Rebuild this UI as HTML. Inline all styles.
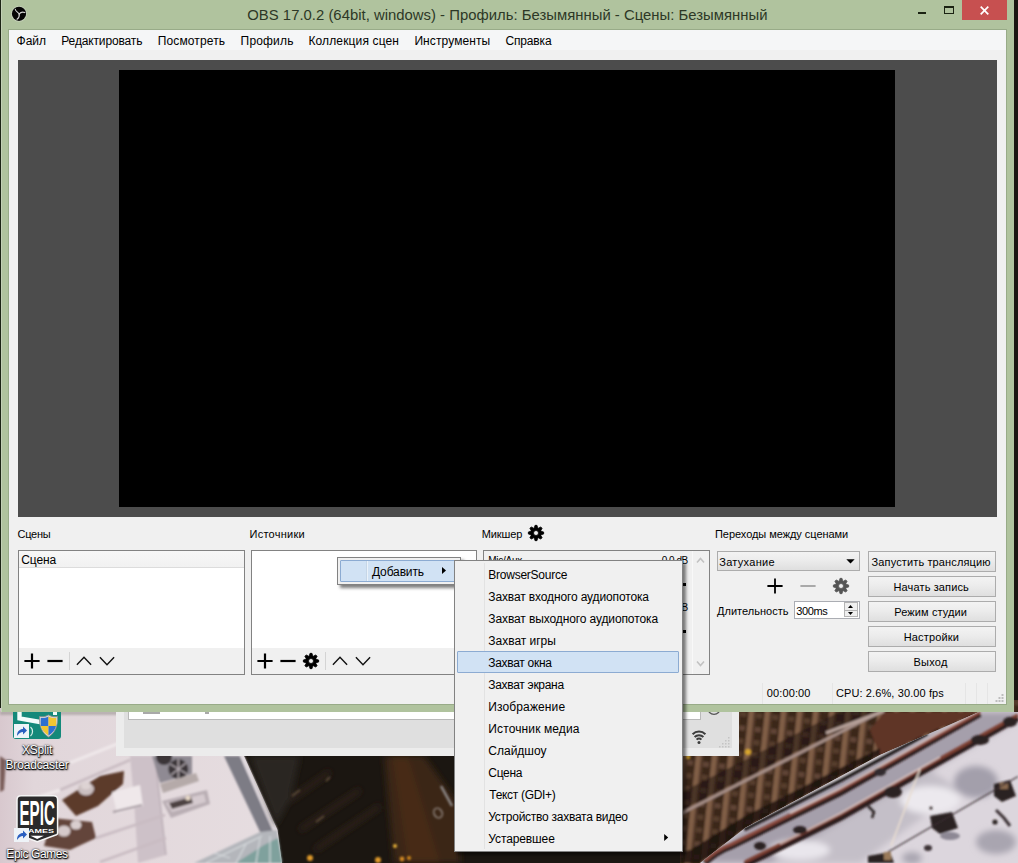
<!DOCTYPE html>
<html lang="ru">
<head>
<meta charset="utf-8">
<title>OBS</title>
<style>
html,body{margin:0;padding:0;}
body{width:1018px;height:863px;overflow:hidden;position:relative;background:#1c1612;font-family:"Liberation Sans",sans-serif;font-size:11px;color:#000;}
.a{position:absolute;box-sizing:border-box;}
.t{position:absolute;white-space:nowrap;line-height:20px;height:20px;}
.list{position:absolute;box-sizing:border-box;border:1px solid #828282;background:#fff;}
.tb{position:absolute;left:0;right:0;bottom:0;height:26px;background:#f0f0f0;}
.btn{position:absolute;left:868px;width:128px;height:21px;box-sizing:border-box;border:1px solid #acacac;background:linear-gradient(#f3f3f3,#ececec 45%,#dfdfdf);}
.menu{position:absolute;background:#f0f0f0;border:1px solid #828282;box-sizing:border-box;box-shadow:3px 3px 3px rgba(0,0,0,.5);}
.ic{position:absolute;overflow:visible;}
.dl{position:absolute;white-space:nowrap;color:#fff;font-size:12px;line-height:16px;text-align:center;text-shadow:0 0 2px #000,1px 1px 2px #000,0 1px 1px #000;}
</style>
</head>
<body>
<!-- wallpaper -->
<svg class="a" style="left:0;top:0" width="1018" height="863" viewBox="0 0 1018 863">
<defs>
<filter id="b1" x="-10%" y="-10%" width="120%" height="120%"><feGaussianBlur stdDeviation="1.2"/></filter>
<filter id="b3" x="-10%" y="-10%" width="120%" height="120%"><feGaussianBlur stdDeviation="3"/></filter>
<linearGradient id="snowL" x1="0" y1="0" x2="1" y2="0"><stop offset="0" stop-color="#d8c8ce"/><stop offset="0.12" stop-color="#e1d6da"/><stop offset="1" stop-color="#e6dde0"/></linearGradient>
<linearGradient id="bld" x1="0" y1="0" x2="1" y2="1"><stop offset="0" stop-color="#4a3428"/><stop offset="1" stop-color="#5c4234"/></linearGradient>
</defs>
<rect width="1018" height="863" fill="#1b1611"/>
<!-- left snowy roof -->
<polygon points="0,700 244,700 244,756 277.5,830 282,863 0,863" fill="url(#snowL)"/>
<g filter="url(#b1)">
<!-- parapet grey band -->
<polygon points="224,756 240,756 273,831 262,836" fill="#7d7c85"/>
<polygon points="240,756 244,756 277.5,830 273,831" fill="#e4dde2"/>
<!-- glass structure -->
<polygon points="194,863 260,832 277,830 282,863" fill="#b4b6bb"/>
<polygon points="236,863 264,845 278,838 282,863" fill="#7fa19d"/>
<path d="M206 863 L262 836 M236 863 L246 844 M256 863 L260 838 M270 863 L270 836 M214 853 L230 858" stroke="#d5d9dc" stroke-width="1.2" fill="none"/>
<!-- translucent panel -->
<polygon points="130,756 155,756 166,855 138,863 134,800" fill="#cdc1c8"/>
<path d="M155 756 L166 855" stroke="#b5a9b1" stroke-width="1.2"/>
<!-- fans -->
<polygon points="152,756 192,756 192,774 160,783" fill="#8f8a93"/>
<circle cx="178.3" cy="769" r="10" fill="#3b3539"/><path d="M170 764 L187 774 M171 775 L186 763 M178.3 759 V779" stroke="#b9b0b6" stroke-width="1.3"/>
<circle cx="164" cy="757" r="8" fill="#3b3539"/>
<polygon points="160,784 196,773 199,781 163,793" fill="#b5aaa9"/>
<!-- tray -->
<polygon points="162,801 207,790 210,804 171,818" fill="#b9aeb4"/>
<polygon points="166,803 204,794 206,802 172,812" fill="#d5cacf"/>
<polygon points="169,803 191,797 193,803 172,809" fill="#4e4242"/><circle cx="188" cy="798" r="2.5" fill="#e8d9c8"/>
<!-- left structures -->
<polygon points="100,776 124,771 123,784 98,806 76,816 62,800 84,786" fill="#5b3a2c"/>
<ellipse cx="86" cy="789" rx="8" ry="6.5" fill="#cbbfc0"/><ellipse cx="86" cy="786" rx="5" ry="3.5" fill="#ddd3d3"/>
<polygon points="52,818 92,822 96,838 70,850 44,846" fill="#64453a"/>
<ellipse cx="64" cy="831" rx="6.5" ry="5.5" fill="#d5c9ca"/><ellipse cx="76" cy="825" rx="5.5" ry="4.5" fill="#d9cecf"/>
<polygon points="112,792 140,785 143,806 117,813" fill="#efe8ea"/>
<path d="M113 812 L142 805" stroke="#a79ca3" stroke-width="2"/>
<polygon points="0,756 6,760 4,790 0,792" fill="#7a5d5a"/>
<path d="M60 790 L130 760 M96 838 L165 815 M100 862 L166 838" stroke="#c9bcc2" stroke-width="2.5" fill="none"/>
<path d="M52 770 L122 742 M30 800 L60 790" stroke="#efe8ea" stroke-width="3" fill="none"/>
<rect x="0" y="711" width="250" height="4" fill="#8d8a86" opacity="0.5"/>
</g>
<!-- street in dark middle -->
<g filter="url(#b3)">
<polygon points="384,756 424,756 460,806 460,863 394,863 388,800" fill="#3b2516"/>
<polygon points="392,756 408,756 440,863 408,863" fill="#4a2d19" opacity="0.8"/>
<polygon points="250,756 300,756 290,800 276,826" fill="#2a2622"/>
<path d="M290 800 L330 772 M300 830 L360 790 M315 850 L380 806" stroke="#2e241b" stroke-width="5" fill="none"/>
</g>
<g filter="url(#b1)">
<circle cx="310" cy="858" r="3" fill="#e09a2a"/><circle cx="378" cy="860" r="3" fill="#e09a2a"/><circle cx="395" cy="846" r="2" fill="#e8b23a"/><circle cx="402" cy="859" r="2.4" fill="#d58a22"/><circle cx="409" cy="858" r="2" fill="#d58a22"/>
<path d="M441 786 L452 806" stroke="#8e8a8a" stroke-width="2.5"/>
<ellipse cx="438" cy="813" rx="4" ry="5" fill="none" stroke="#8a7f78" stroke-width="1.6" transform="rotate(-30 438 813)"/>
<path d="M292 796 L300 790 M316 822 L324 816 M330 777 L326 781" stroke="#5a4a38" stroke-width="2"/>
</g>
<!-- right: building + snowy roof -->
<defs>
<pattern id="cols" width="16" height="40" patternUnits="userSpaceOnUse" patternTransform="rotate(6) translate(3,0)">
<rect width="16" height="40" fill="#38251b"/><rect x="0" width="5.5" height="40" fill="#8a664e"/><rect x="5.5" width="2" height="40" fill="#5a3e2e"/>
<rect x="8" y="4" width="6" height="5" fill="#64483a"/><rect x="8" y="17" width="6" height="5" fill="#5a3f30"/><rect x="8" y="30" width="6" height="5" fill="#5a3f30"/>
</pattern>
<clipPath id="bclip"><polygon points="680,700 1018,700 1018,712 979,712 880,755 745,828 700,863 680,863"/></clipPath>
<clipPath id="sclip"><polygon points="979,712 1018,712 1018,863 700,863 745,828 880,755"/></clipPath>
</defs>
<g clip-path="url(#bclip)">
<rect x="680" y="700" width="340" height="165" fill="#46301f"/>
<g filter="url(#b1)">
<rect x="680" y="700" width="340" height="165" fill="url(#cols)" opacity="0.85"/>
<!-- shadow band above ledge -->
<path d="M680 802 L880 700" stroke="#21140e" stroke-width="16" opacity="0.55"/>
<!-- ledge -->
<path d="M680 814 L884 710" stroke="#a8928b" stroke-width="3"/>
<!-- far right reddish wall -->
<polygon points="884,712 980,712 930,732 880,756 870,730" fill="#5f3427"/>
<path d="M826 733 L884 711" stroke="#b7a39c" stroke-width="3"/>
<!-- dark base shadow -->
<polygon points="680,863 700,863 745,828 880,755 880,748 745,816 690,850 680,852" fill="#1a100c" opacity="0.8"/>
<circle cx="748" cy="752" r="3" fill="#d9a62e"/><circle cx="688" cy="757" r="2" fill="#c89a2a"/>
</g>
</g>
<g clip-path="url(#sclip)">
<rect x="690" y="705" width="330" height="160" fill="#dcd6dd"/>
<g filter="url(#b3)">
<polygon points="700,863 745,828 880,755 979,712 1018,712 1018,720 840,822 770,863" fill="#a59fab"/><polygon points="770,863 840,822 930,770 960,790 860,863" fill="#c4bfc8"/>
<ellipse cx="976" cy="782" rx="22" ry="16" fill="#a39fab"/><ellipse cx="996" cy="842" rx="20" ry="12" fill="#a9a5b0"/><ellipse cx="912" cy="858" rx="10" ry="6" fill="#a9a5b0"/>
<ellipse cx="930" cy="800" rx="30" ry="14" fill="#ece9ee"/><ellipse cx="800" cy="850" rx="30" ry="10" fill="#e9e6ec"/>
</g>
<g filter="url(#b1)">
<!-- pipes: shadow, body, highlight -->
<path d="M744 829 L840 780 L927 733" stroke="#241a1c" stroke-width="5" fill="none"/>
<path d="M744 826 L840 777 L927 730" stroke="#e6e0e4" stroke-width="2.2" fill="none"/>
<path d="M705 863 Q716 852 732 846 L840 793 L980 714" stroke="#2a1d1e" stroke-width="6" fill="none"/>
<path d="M705 861 Q716 850 732 844 L840 790 L980 712" stroke="#8a4a3c" stroke-width="3.2" fill="none"/>
<path d="M790 813 L840 788.5 L978 711" stroke="#e3cfcc" stroke-width="1.4" fill="none"/>
<path d="M745 865 L840 818 L1018 718" stroke="#2a1d1e" stroke-width="6" fill="none"/>
<path d="M745 862 L840 814.6 L1018 715" stroke="#7d3f33" stroke-width="3.2" fill="none"/>
<path d="M780 844 L840 813.4 L940 757" stroke="#e3cfcc" stroke-width="1.4" fill="none"/>
<!-- dark objects -->
<ellipse cx="893" cy="792" rx="9" ry="6" fill="#2a2022"/><ellipse cx="880" cy="772" rx="6" ry="4" fill="#332a2d"/>
<ellipse cx="980" cy="740" rx="9" ry="5" fill="#2a2022"/><ellipse cx="1010" cy="722" rx="7" ry="5" fill="#2a2022"/>
<polygon points="930,816 952,812 958,828 940,834 932,828" fill="#2c2221"/><ellipse cx="950" cy="836" rx="10" ry="4" fill="#8d8894"/>
<polygon points="994,784 1010,780 1016,796 1002,802 994,796" fill="#2c2221"/><rect x="1000" y="783" width="8" height="6" fill="#8a6a50"/>
<polygon points="868,856 890,852 894,863 868,863" fill="#2c2221"/><rect x="884" y="852" width="7" height="8" fill="#9a7a5a"/>
<path d="M868 806 L874 812 L872 818" stroke="#2c2221" stroke-width="2.5" fill="none"/>
<path d="M996 810 L1004 818 L1010 826" stroke="#3a3034" stroke-width="3" fill="none"/><circle cx="995" cy="822" r="2.6" fill="#2c2221"/>
<circle cx="931" cy="808" r="1.6" fill="#2c2221"/><ellipse cx="928" cy="848" rx="4" ry="3" fill="#3a3034"/>
<ellipse cx="800" cy="830" rx="7" ry="4" fill="#2a2022"/><ellipse cx="760" cy="846" rx="6" ry="4" fill="#2a2022"/>
<!-- wire -->
<path d="M888 852 L1018 776.5" stroke="#3a2f33" stroke-width="1.2" fill="none"/>
<path d="M920 769 L891 846" stroke="#e9ddd0" stroke-width="1.6" fill="none"/>
</g>
</g>
</svg>

<!-- window behind -->
<div class="a" style="left:116px;top:700px;width:623px;height:56px;background:#ececec;"></div>
<div class="a" style="left:124px;top:700px;width:608px;height:48px;background:#dfdfdf;"></div>
<div class="a" style="left:128px;top:700px;width:573px;height:20px;background:#fff;border:1px solid #b9b9b9;"></div><div class="a" style="left:143px;top:712px;width:17px;height:1.5px;background:#a9a9a9;"></div><div class="a" style="left:205px;top:712px;width:4px;height:1.5px;background:#a9a9a9;"></div>
<svg class="ic" style="left:691px;top:729px" width="16" height="16" viewBox="0 0 16 16"><g fill="none" stroke="#3c3c3c" stroke-width="2"><path d="M1.6 5.2 A9 9 0 0 1 14.4 5.2"/><path d="M3.6 8 A6.2 6.2 0 0 1 12.4 8"/><path d="M5.6 10.6 A3.4 3.4 0 0 1 10.4 10.6"/></g><circle cx="8" cy="13.4" r="1.5" fill="#3c3c3c"/></svg>
<svg class="ic" style="left:706px;top:706px" width="16" height="10" viewBox="0 0 16 10"><circle cx="8" cy="2" r="6.3" fill="none" stroke="#555" stroke-width="1.2"/></svg>
<svg class="ic" style="left:719px;top:736px" width="12" height="12" viewBox="0 0 12 12" fill="#c4c4c4"><rect x="9" y="1" width="1.5" height="1.5"/><rect x="6" y="4" width="1.5" height="1.5"/><rect x="9" y="4" width="1.5" height="1.5"/><rect x="3" y="7" width="1.5" height="1.5"/><rect x="6" y="7" width="1.5" height="1.5"/><rect x="9" y="7" width="1.5" height="1.5"/><rect x="0" y="10" width="1.5" height="1.5"/><rect x="3" y="10" width="1.5" height="1.5"/><rect x="6" y="10" width="1.5" height="1.5"/><rect x="9" y="10" width="1.5" height="1.5"/></svg>
<!-- desktop icons -->
<div class="a" style="left:13px;top:700px;width:48px;height:39px;background:#14897a;border-radius:0 0 3px 3px;"></div>
<svg class="ic" style="left:13px;top:700px" width="48" height="39" viewBox="0 0 48 39"><path d="M6.5 0 V18.5 L27 22" fill="none" stroke="#f2fbfa" stroke-width="4.4"/><path d="M42 0 V15" fill="none" stroke="#f2fbfa" stroke-width="4"/><path d="M9 0 H40 V6 L9 4Z" fill="#0f6f63" opacity="0.6"/><path d="M17.5 27 A6 6 0 0 1 17.5 36" fill="none" stroke="#d8efe9" stroke-width="1.2"/><rect x="1" y="24" width="15" height="14" fill="#eef3f8"/><path d="M4 36 C4 31 7 29 10 29 V26.5 L14 30.5 L10 34.5 V32 C7.5 32 6 33.5 4 36Z" fill="#2a5fc0"/><path d="M35.5 15 C32 17 29 17 26.5 16.5 C26 26 29 33 35.5 37 C42 33 45 26 44.5 16.5 C42 17 39 17 35.5 15Z" fill="#d9d9d9" stroke="#8e8e8e" stroke-width="0.8"/><path d="M35.5 16.5 V26 H28 C27.6 22 27.7 19.5 27.8 18 C30.5 18.2 33 17.8 35.5 16.5Z" fill="#2d6fd1"/><path d="M35.5 16.5 V26 H43 C43.4 22 43.3 19.5 43.2 18 C40.5 18.2 38 17.8 35.5 16.5Z" fill="#f1c531"/><path d="M35.5 26 V35.5 C31.5 33 29 30 28 26Z" fill="#f1c531"/><path d="M35.5 26 V35.5 C39.5 33 42 30 43 26Z" fill="#2d6fd1"/></svg>
<div class="dl" style="left:-14px;width:102px;top:742px;letter-spacing:-0.2px;">XSplit</div>
<div class="dl" style="left:-14px;width:102px;top:756.5px;letter-spacing:-0.15px;">Broadcaster</div>
<svg class="ic" style="left:16px;top:795px" width="44" height="48" viewBox="0 0 44 48"><path d="M5 0.8 H37.6 Q41.6 0.8 41.6 4.8 V38 Q41.6 39.3 40.4 39.8 L21.3 46.6 L2.2 39.8 Q1 39.3 1 38 V4.8 Q1 0.8 5 0.8Z" fill="#2b2a2b" stroke="#f4f4f4" stroke-width="1.5"/><g transform="translate(0,30) scale(1,1.5)"><text x="21.2" y="0" text-anchor="middle" font-family="'Liberation Sans',sans-serif" font-weight="bold" font-size="24" fill="#fff" textLength="35.5" lengthAdjust="spacingAndGlyphs">EPIC</text></g><text x="21.5" y="37.8" text-anchor="middle" font-family="'Liberation Sans',sans-serif" font-weight="bold" font-size="5.6" fill="#fff" textLength="33" lengthAdjust="spacingAndGlyphs">GAMES</text><path d="M14.5 40.8 H27.9 L21.2 43.9Z" fill="#fff"/></svg>
<svg class="ic" style="left:14px;top:828px" width="15" height="14" viewBox="0 0 15 14"><rect x="0" y="0" width="15" height="14" fill="#eef3f8"/><path d="M3 12 C3 7 6 5 9 5 V2.5 L13 6.5 L9 10.5 V8 C6.5 8 5 9.5 3 12Z" fill="#2a5fc0"/></svg>
<div class="dl" style="left:-14px;width:102px;top:845.5px;letter-spacing:-0.4px;">Epic Games</div>

<!-- main window frame -->
<div class="a" style="left:0;top:0;width:1px;height:708px;background:#1c2414;"></div>
<div class="a" style="left:1px;top:0;width:1013px;height:712px;background:#b0c39e;"></div>
<div class="a" style="left:1px;top:0;width:1px;height:712px;background:#c3d0b6;"></div>
<div class="a" style="left:8px;top:29px;width:999px;height:676px;background:#98ab88;"></div>
<div class="a" style="left:9px;top:30px;width:997px;height:674px;background:#f0f0f0;"></div>
<!-- title bar -->
<svg class="ic" style="left:10px;top:4px" width="18" height="20" viewBox="0 0 18 20"><circle cx="9" cy="9.8" r="7.9" fill="#c6d2bb"/><circle cx="9" cy="9.8" r="7.1" fill="#050505"/><g fill="none" stroke="#d8d8d8" stroke-width="1.1" stroke-linecap="round"><path d="M9.2 10 C7.8 7.6 5.6 7.6 5.3 5.2"/><path d="M9.2 10 C10.6 8.2 12.6 7.6 14.8 8.6"/><path d="M9.2 10 C9.6 12.6 8.6 14.2 7 15.2"/></g></svg>
<div class="t" style="left:247.30px;top:4.60px;font-size:14.85px;letter-spacing:0.021px;color:#2d3826;">OBS 17.0.2 (64bit, windows) - Профиль: Безымянный - Сцены: Безымянный</div>
<div class="a" style="left:918px;top:12px;width:8px;height:2px;background:#1a2212;"></div>
<div class="a" style="left:944px;top:6px;width:10px;height:8px;border:1px solid #1a2212;border-top-width:2px;"></div>
<div class="a" style="left:962px;top:0;width:45px;height:20px;background:#c75050;"></div>
<svg class="ic" style="left:980px;top:6px" width="9" height="9" viewBox="0 0 9 9"><path d="M0.7 0.7 L8.3 8.3 M8.3 0.7 L0.7 8.3" stroke="#fff" stroke-width="1.7" fill="none"/></svg>
<!-- menubar -->
<div class="a" style="left:9px;top:30px;width:997px;height:20px;background:#f5f6f7;"></div>
<div class="t" style="left:16.60px;top:30.80px;font-size:12px;letter-spacing:-0.066px;color:#000;">Файл</div><div class="t" style="left:61.30px;top:30.80px;font-size:12px;letter-spacing:-0.150px;color:#000;">Редактировать</div><div class="t" style="left:157.70px;top:30.80px;font-size:12px;letter-spacing:0.134px;color:#000;">Посмотреть</div><div class="t" style="left:240.60px;top:30.80px;font-size:12px;letter-spacing:0.167px;color:#000;">Профиль</div><div class="t" style="left:308.40px;top:30.80px;font-size:12px;letter-spacing:0.138px;color:#000;">Коллекция сцен</div><div class="t" style="left:414.40px;top:30.80px;font-size:12px;letter-spacing:0.100px;color:#000;">Инструменты</div><div class="t" style="left:505.50px;top:30.80px;font-size:12px;letter-spacing:-0.167px;color:#000;">Справка</div>
<!-- preview -->
<div class="a" style="left:18px;top:60px;width:979px;height:457px;background:#4c4c4c;"></div>
<div class="a" style="left:119px;top:70px;width:776px;height:437px;background:#000;"></div>
<!-- labels -->
<div class="t" style="left:17.50px;top:524.00px;font-size:11px;letter-spacing:-0.250px;color:#000;">Сцены</div><div class="t" style="left:249.50px;top:524.00px;font-size:11px;letter-spacing:0.250px;color:#000;">Источники</div><div class="t" style="left:481.70px;top:524.00px;font-size:11px;letter-spacing:-0.080px;color:#000;">Микшер</div><div class="t" style="left:715.00px;top:524.00px;font-size:11px;letter-spacing:-0.048px;color:#000;">Переходы между сценами</div>
<!-- scenes -->
<div class="list" style="left:18px;top:550px;width:227px;height:125px;">
  <div class="a" style="left:0;top:0;width:225px;height:17px;background:linear-gradient(#f7f7f7,#f1f1f1);border-bottom:1px solid #dcdcdc;"></div>
  <div class="tb"></div>
</div>
<div class="t" style="left:21.30px;top:549.90px;font-size:12px;letter-spacing:-0.150px;color:#000;">Сцена</div>
<!-- sources -->
<div class="list" style="left:251px;top:550px;width:226px;height:125px;">
  <div class="tb"></div>
</div>
<!-- toolbar icons -->
<svg class="ic" style="left:23.80px;top:653.00px" width="16" height="16" viewBox="0 0 16 16"><path d="M0.40000000000000036 8 H15.6 M8 0.40000000000000036 V15.6" stroke="#000" stroke-width="2.2" fill="none"/></svg><svg class="ic" style="left:47.00px;top:653.00px" width="16" height="16" viewBox="0 0 16 16"><path d="M0.40000000000000036 8 H15.6" stroke="#000" stroke-width="2.2" fill="none"/></svg><div class="a" style="left:69px;top:652px;width:1px;height:18px;background:#d4d4d4;"></div><svg class="ic" style="left:76.00px;top:653.20px" width="16" height="16" viewBox="0 0 16 16"><path d="M0.9000000000000004 11.7 L8 4.3 L15.1 11.7" stroke="#111" stroke-width="1.4" fill="none" stroke-linejoin="miter"/></svg><svg class="ic" style="left:99.20px;top:653.20px" width="16" height="16" viewBox="0 0 16 16"><path d="M0.9000000000000004 4.3 L8 11.7 L15.1 4.3" stroke="#111" stroke-width="1.4" fill="none" stroke-linejoin="miter"/></svg>
<svg class="ic" style="left:256.80px;top:653.00px" width="16" height="16" viewBox="0 0 16 16"><path d="M0.40000000000000036 8 H15.6 M8 0.40000000000000036 V15.6" stroke="#000" stroke-width="2.2" fill="none"/></svg><svg class="ic" style="left:280.00px;top:653.00px" width="16" height="16" viewBox="0 0 16 16"><path d="M0.40000000000000036 8 H15.6" stroke="#000" stroke-width="2.2" fill="none"/></svg><svg class="ic" style="left:303.0px;top:653.0px" width="16" height="16" viewBox="0 0 16 16"><path d="M6.37 2.75 L7.00 0.36 L9.00 0.36 L9.63 2.75 L10.57 3.14 L12.69 1.90 L14.10 3.31 L12.86 5.43 L13.25 6.37 L15.64 7.00 L15.64 9.00 L13.25 9.63 L12.86 10.57 L14.10 12.69 L12.69 14.10 L10.57 12.86 L9.63 13.25 L9.00 15.64 L7.00 15.64 L6.37 13.25 L5.43 12.86 L3.31 14.10 L1.90 12.69 L3.14 10.57 L2.75 9.63 L0.36 9.00 L0.36 7.00 L2.75 6.37 L3.14 5.43 L1.90 3.31 L3.31 1.90 L5.43 3.14Z M8 5.5 A2.5 2.5 0 1 0 8 10.5 A2.5 2.5 0 1 0 8 5.5Z" fill="#000" fill-rule="evenodd" stroke="#000" stroke-width="0.8" stroke-linejoin="round"/></svg><div class="a" style="left:325px;top:652px;width:1px;height:18px;background:#d4d4d4;"></div><svg class="ic" style="left:332.10px;top:653.20px" width="16" height="16" viewBox="0 0 16 16"><path d="M0.9000000000000004 11.7 L8 4.3 L15.1 11.7" stroke="#111" stroke-width="1.4" fill="none" stroke-linejoin="miter"/></svg><svg class="ic" style="left:355.10px;top:653.20px" width="16" height="16" viewBox="0 0 16 16"><path d="M0.9000000000000004 4.3 L8 11.7 L15.1 4.3" stroke="#111" stroke-width="1.4" fill="none" stroke-linejoin="miter"/></svg>
<svg class="ic" style="left:528.0px;top:525.0px" width="16" height="16" viewBox="0 0 16 16"><path d="M6.37 2.75 L7.00 0.36 L9.00 0.36 L9.63 2.75 L10.57 3.14 L12.69 1.90 L14.10 3.31 L12.86 5.43 L13.25 6.37 L15.64 7.00 L15.64 9.00 L13.25 9.63 L12.86 10.57 L14.10 12.69 L12.69 14.10 L10.57 12.86 L9.63 13.25 L9.00 15.64 L7.00 15.64 L6.37 13.25 L5.43 12.86 L3.31 14.10 L1.90 12.69 L3.14 10.57 L2.75 9.63 L0.36 9.00 L0.36 7.00 L2.75 6.37 L3.14 5.43 L1.90 3.31 L3.31 1.90 L5.43 3.14Z M8 5.5 A2.5 2.5 0 1 0 8 10.5 A2.5 2.5 0 1 0 8 5.5Z" fill="#000" fill-rule="evenodd" stroke="#000" stroke-width="0.8" stroke-linejoin="round"/></svg>
<svg class="ic" style="left:767.00px;top:578.00px" width="16" height="16" viewBox="0 0 16 16"><path d="M0.40000000000000036 8 H15.6 M8 0.40000000000000036 V15.6" stroke="#000" stroke-width="1.8" fill="none"/></svg><svg class="ic" style="left:799.80px;top:578.00px" width="16" height="16" viewBox="0 0 16 16"><path d="M0.40000000000000036 8 H15.6" stroke="#9c9c9c" stroke-width="1.7" fill="none"/></svg><svg class="ic" style="left:833.0px;top:578.0px" width="16" height="16" viewBox="0 0 16 16"><path d="M6.37 2.75 L7.00 0.36 L9.00 0.36 L9.63 2.75 L10.57 3.14 L12.69 1.90 L14.10 3.31 L12.86 5.43 L13.25 6.37 L15.64 7.00 L15.64 9.00 L13.25 9.63 L12.86 10.57 L14.10 12.69 L12.69 14.10 L10.57 12.86 L9.63 13.25 L9.00 15.64 L7.00 15.64 L6.37 13.25 L5.43 12.86 L3.31 14.10 L1.90 12.69 L3.14 10.57 L2.75 9.63 L0.36 9.00 L0.36 7.00 L2.75 6.37 L3.14 5.43 L1.90 3.31 L3.31 1.90 L5.43 3.14Z M8 5.5 A2.5 2.5 0 1 0 8 10.5 A2.5 2.5 0 1 0 8 5.5Z" fill="#555" fill-rule="evenodd" stroke="#555" stroke-width="0.8" stroke-linejoin="round"/></svg>
<!-- mixer -->
<div class="list" style="left:483px;top:550px;width:227px;height:125px;background:#f0f0f0;"></div>
<div class="t" style="left:488.30px;top:551.30px;font-size:10px;letter-spacing:-0.267px;color:#000;">Mic/Aux</div>
<div class="t" style="left:661.70px;top:551.30px;font-size:10px;letter-spacing:-0.480px;color:#000;">0.0 dB</div><div class="t" style="left:661.70px;top:598.30px;font-size:10px;letter-spacing:-0.480px;color:#000;">0.0 dB</div>
<div class="a" style="left:683px;top:582.5px;width:2.5px;height:3px;background:#000;"></div>
<div class="a" style="left:683px;top:629.5px;width:2.5px;height:3px;background:#000;"></div>
<div class="a" style="left:692px;top:551px;width:1px;height:123px;background:#f8f8f8;"></div>
<svg class="ic" style="left:696px;top:556px" width="9" height="8" viewBox="0 0 9 8"><path d="M1 6.5 L4.5 2.5 L8 6.5" stroke="#c2c2c2" stroke-width="1.6" fill="none"/></svg>
<svg class="ic" style="left:696px;top:660px" width="9" height="8" viewBox="0 0 9 8"><path d="M1 1.5 L4.5 5.5 L8 1.5" stroke="#c2c2c2" stroke-width="1.6" fill="none"/></svg>
<!-- transitions -->
<div class="a" style="left:717px;top:551px;width:143px;height:20px;border:1px solid #acacac;background:linear-gradient(#f3f3f3,#ececec 45%,#dfdfdf);"></div>
<div class="t" style="left:719.20px;top:551.60px;font-size:11px;letter-spacing:0.300px;color:#000;">Затухание</div>
<svg class="ic" style="left:846px;top:559px" width="9" height="5" viewBox="0 0 9 5"><path d="M0.3 0.2 H8.7 L4.5 4.6 Z" fill="#000"/></svg>
<div class="t" style="left:717.00px;top:601.00px;font-size:11px;letter-spacing:0.019px;color:#000;">Длительность</div>
<div class="a" style="left:794px;top:601px;width:66px;height:18px;border:1px solid #abadb3;background:#fff;"></div>
<div class="t" style="left:796.20px;top:601.00px;font-size:11px;letter-spacing:-0.350px;color:#000;">300ms</div>
<div class="a" style="left:844px;top:602px;width:14px;height:15px;border:1px solid #b4b4b4;background:#efefef;"></div>
<div class="a" style="left:845px;top:610px;width:12px;height:1px;background:#b4b4b4;"></div>
<svg class="ic" style="left:848px;top:605px" width="5" height="3" viewBox="0 0 5 3"><path d="M0 3 L2.5 0 L5 3Z" fill="#000"/></svg>
<svg class="ic" style="left:848px;top:612px" width="5" height="3" viewBox="0 0 5 3"><path d="M0 0 L2.5 3 L5 0Z" fill="#000"/></svg>
<!-- buttons -->
<div class="btn" style="top:551px"></div><div class="btn" style="top:576px"></div><div class="btn" style="top:601px"></div><div class="btn" style="top:626px"></div><div class="btn" style="top:651px"></div>
<div class="t" style="left:871.60px;top:551.60px;font-size:11px;letter-spacing:0.126px;color:#000;">Запустить трансляцию</div><div class="t" style="left:893.50px;top:576.60px;font-size:11px;letter-spacing:0.133px;color:#000;">Начать запись</div><div class="t" style="left:894.30px;top:601.60px;font-size:11px;letter-spacing:0.109px;color:#000;">Режим студии</div><div class="t" style="left:903.70px;top:626.60px;font-size:11px;letter-spacing:0.150px;color:#000;">Настройки</div><div class="t" style="left:913.50px;top:651.60px;font-size:11px;letter-spacing:0.250px;color:#000;">Выход</div>
<!-- status -->
<div class="t" style="left:766.80px;top:683.10px;font-size:11px;letter-spacing:0.114px;color:#000;">00:00:00</div><div class="t" style="left:836.00px;top:683.10px;font-size:11px;letter-spacing:0.106px;color:#000;">CPU: 2.6%, 30.00 fps</div>
<div class="a" style="left:762px;top:683px;width:1px;height:21px;background:#e5e5e5;"></div>
<div class="a" style="left:832px;top:683px;width:1px;height:21px;background:#e5e5e5;"></div>
<div class="a" style="left:965px;top:683px;width:1px;height:21px;background:#e5e5e5;"></div>
<div class="a" style="left:976px;top:683px;width:1px;height:21px;background:#e5e5e5;"></div>
<div class="a" style="left:987px;top:683px;width:1px;height:21px;background:#e5e5e5;"></div>
<svg class="ic" style="left:995px;top:693px" width="9" height="9" viewBox="0 0 9 9" fill="#bdbdbd"><rect x="6.5" y="1" width="2" height="2"/><rect x="3.5" y="4" width="2" height="2"/><rect x="6.5" y="4" width="2" height="2"/><rect x="0.5" y="7" width="2" height="2"/><rect x="3.5" y="7" width="2" height="2"/><rect x="6.5" y="7" width="2" height="2"/></svg>
<!-- menus -->
<div class="menu" style="left:337px;top:557px;width:124px;height:28px;"></div>
<div class="a" style="left:340px;top:560px;width:118px;height:22px;background:#d1e2f4;border:1px solid #8cabd2;border-radius:1px;"></div>
<div class="a" style="left:366px;top:561px;width:1px;height:20px;background:rgba(0,0,0,.05);"></div><div class="a" style="left:367px;top:561px;width:1px;height:20px;background:rgba(255,255,255,.55);"></div>
<div class="t" style="left:372.00px;top:561.70px;font-size:12px;letter-spacing:-0.143px;color:#000;">Добавить</div>
<svg class="ic" style="left:442px;top:567px" width="4" height="7" viewBox="0 0 4 7"><path d="M0 0 L4 3.5 L0 7 Z" fill="#000"/></svg>
<div class="menu" style="left:454px;top:560px;width:229px;height:292px;"></div>
<div class="a" style="left:484px;top:563px;width:1px;height:286px;background:#e2e2e2;"></div>
<div class="a" style="left:457px;top:651px;width:222px;height:22px;background:#d1e2f4;border:1px solid #8cabd2;border-radius:1px;"></div>
<div class="t" style="left:488.30px;top:564.70px;font-size:12px;letter-spacing:-0.250px;color:#000;">BrowserSource</div><div class="t" style="left:488.30px;top:586.70px;font-size:12px;letter-spacing:-0.130px;color:#000;">Захват входного аудиопотока</div><div class="t" style="left:488.30px;top:608.70px;font-size:12px;letter-spacing:-0.111px;color:#000;">Захват выходного аудиопотока</div><div class="t" style="left:488.30px;top:630.70px;font-size:12px;letter-spacing:-0.020px;color:#000;">Захват игры</div><div class="t" style="left:488.30px;top:652.70px;font-size:12px;letter-spacing:-0.300px;color:#000;">Захват окна</div><div class="t" style="left:488.30px;top:674.70px;font-size:12px;letter-spacing:-0.300px;color:#000;">Захват экрана</div><div class="t" style="left:488.30px;top:696.70px;font-size:12px;letter-spacing:0.120px;color:#000;">Изображение</div><div class="t" style="left:488.30px;top:718.70px;font-size:12px;letter-spacing:0.123px;color:#000;">Источник медиа</div><div class="t" style="left:488.30px;top:740.70px;font-size:12px;letter-spacing:-0.000px;color:#000;">Слайдшоу</div><div class="t" style="left:488.30px;top:762.70px;font-size:12px;letter-spacing:-0.300px;color:#000;">Сцена</div><div class="t" style="left:489.30px;top:784.70px;font-size:12px;letter-spacing:-0.309px;color:#000;">Текст (GDI+)</div><div class="t" style="left:488.30px;top:806.70px;font-size:12px;letter-spacing:-0.261px;color:#000;">Устройство захвата видео</div><div class="t" style="left:488.30px;top:828.70px;font-size:12px;letter-spacing:-0.111px;color:#000;">Устаревшее</div>
<svg class="ic" style="left:664px;top:834px" width="4.4" height="7" viewBox="0 0 4 7"><path d="M0 0 L4 3.5 L0 7 Z" fill="#000"/></svg>
</body>
</html>
